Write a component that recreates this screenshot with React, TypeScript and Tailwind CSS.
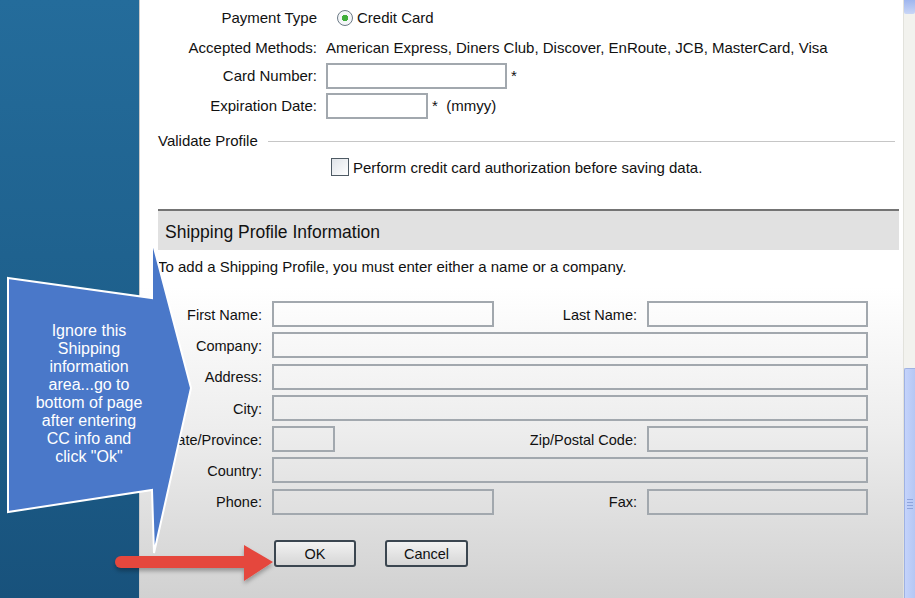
const font = { fontFamily: '"Liberation Sans", Arial, sans-serif' };

function Field({ className = "" }: { className?: string }) {
  return <div className={`h-[26px] border-2 border-[#a2a8ae] ${className}`} />;
}

function Label({ children }: { children: React.ReactNode }) {
  return <div className="text-right whitespace-nowrap text-[14.5px] pt-[3px]">{children}</div>;
}

function Callout() {
  return (
    <div className="absolute left-0 top-[230px] w-[200px] h-[335px] pointer-events-none">
      <svg width="200" height="335" viewBox="0 230 200 335" className="absolute inset-0">
        <polygon
          points="8,278 152,298 152,240 191,388 154,553 152,490 8,512"
          fill="#4a78c9"
          stroke="#ffffff"
          strokeWidth="2"
          strokeLinejoin="miter"
        />
      </svg>
      <div className="absolute left-[9px] top-[92px] w-[160px] text-center text-white text-[16px] leading-[18px]">
        Ignore this<br />Shipping<br />information<br />area...go to<br />bottom of page<br />after entering<br />CC info and<br />click "Ok"
      </div>
    </div>
  );
}

function RedArrow() {
  return (
    <svg width="170" height="50" viewBox="110 540 170 50" className="absolute left-[110px] top-[540px] pointer-events-none">
      <defs>
        <filter id="sh" x="-10%" y="-30%" width="120%" height="180%">
          <feDropShadow dx="0" dy="3" stdDeviation="2" floodColor="#000" floodOpacity="0.3" />
        </filter>
      </defs>
      <g filter="url(#sh)">
        <rect x="115" y="556" width="135" height="12" rx="6" fill="#e5463d" />
        <polygon points="244,545 273,562 244,581" fill="#e5463d" />
      </g>
    </svg>
  );
}

export default function App() {
  return (
    <div className="relative flex h-[598px] w-[915px] overflow-hidden text-[15px] text-[#111]" style={font}>
      <div className="w-[139px] shrink-0 bg-[linear-gradient(to_bottom,#246c9b,#1d5e8a_60%,#18527c)]" />

      <div className="flex-1 border-l border-[#c9c9c9] bg-[linear-gradient(to_bottom,#ffffff_0%,#ffffff_48%,#ededed_72%,#d1d1d1_100%)] pl-[18px] pr-[4px]">
        <div className="grid grid-cols-[159px_1fr] gap-x-[9px]">
          <div className="h-[33px] flex items-center justify-end pt-[3px]">Payment Type</div>
          <div className="h-[33px] flex items-center pt-[3px] pl-[11px]">
            <span className="w-[16px] h-[16px] rounded-full border border-[#6c7a86] bg-[radial-gradient(circle,#3fae3a_0,#3fae3a_3px,#f4f6f8_3.5px)] mr-[4px]" />
            Credit Card
          </div>
          <div className="h-[30px] flex items-center justify-end">Accepted Methods:</div>
          <div className="h-[30px] flex items-center whitespace-nowrap">American Express, Diners Club, Discover, EnRoute, JCB, MasterCard, Visa</div>
          <div className="h-[26px] flex items-center justify-end">Card Number:</div>
          <div className="h-[26px] flex items-start gap-[4px]">
            <Field className="w-[181px] bg-white" />
            <span className="pt-[2px]">*</span>
          </div>
          <div className="h-[34px] flex items-center justify-end">Expiration Date:</div>
          <div className="h-[34px] flex items-center gap-[4px]">
            <Field className="w-[102px] bg-white" />
            <span className="pt-[1px]">*&nbsp; (mmyy)</span>
          </div>
        </div>

        <div className="mt-[7px] h-[22px] flex items-center gap-[10px]">
          <span>Validate Profile</span>
          <div className="flex-1 h-px bg-[#c6c6c6] mr-[4px]" />
        </div>

        <div className="mt-[4px] h-[24px] flex items-center pl-[173px]">
          <span className="w-[18px] h-[18px] border border-[#4e5a64] bg-[linear-gradient(135deg,#dfe3e8,#ffffff)] mr-[4px] -mt-[3px]" />
          <span>Perform credit card authorization before saving data.</span>
        </div>

        <div className="mt-[29px] border-t-2 border-[#747474] bg-[#e1e1e1] h-[41px] flex items-center pl-[7px] pt-[3px] text-[17.5px]">
          Shipping Profile Information
        </div>

        <div className="h-[34px] flex items-center">To add a Shipping Profile, you must enter either a name or a company.</div>

        <div className="mt-[17px] grid grid-cols-[104px_222px_133px_221px] gap-x-[10px] gap-y-[5.3px] items-center">
          <Label>First Name:</Label>
          <Field />
          <Label>Last Name:</Label>
          <Field />

          <Label>Company:</Label>
          <Field className="col-span-3" />

          <Label>Address:</Label>
          <Field className="col-span-3" />

          <Label>City:</Label>
          <Field className="col-span-3" />

          <Label>State/Province:</Label>
          <div className="h-[26px]">
            <Field className="w-[63px]" />
          </div>
          <Label>Zip/Postal Code:</Label>
          <Field />

          <Label>Country:</Label>
          <Field className="col-span-3" />

          <Label>Phone:</Label>
          <Field />
          <Label>Fax:</Label>
          <Field />
        </div>

        <div className="mt-[25px] flex gap-[29px] pl-[116px]">
          <button className="w-[82px] h-[27px] pt-[2px] rounded-[3px] border-2 border-[#3b4650] bg-[linear-gradient(to_bottom,#f2f2f2,#d6d6d6)] text-[14.5px]">
            OK
          </button>
          <button className="w-[83px] h-[27px] pt-[2px] rounded-[3px] border-2 border-[#3b4650] bg-[linear-gradient(to_bottom,#f2f2f2,#d6d6d6)] text-[14.5px]">
            Cancel
          </button>
        </div>
      </div>

      <div className="w-[12px] shrink-0 flex flex-col bg-[#f2f2ee] border-l border-[#e2e2dc]">
        <div className="h-[14px] bg-[linear-gradient(to_bottom,#9fb6ee,#c9d6f6)] rounded-b-[2px]" />
        <div className="h-[354px]" />
        <div className="flex-1 flex items-center justify-center bg-[linear-gradient(to_right,#c4d3fb,#b5c7f4)] border-l border-t border-[#9fb2e2] rounded-tl-[2px]">
          <div className="flex flex-col gap-[2px] w-[6px] mt-[40px]">
            <span className="h-px bg-[#8ea4dc]" />
            <span className="h-px bg-[#8ea4dc]" />
            <span className="h-px bg-[#8ea4dc]" />
            <span className="h-px bg-[#8ea4dc]" />
          </div>
        </div>
      </div>

      <Callout />
      <RedArrow />
    </div>
  );
}
